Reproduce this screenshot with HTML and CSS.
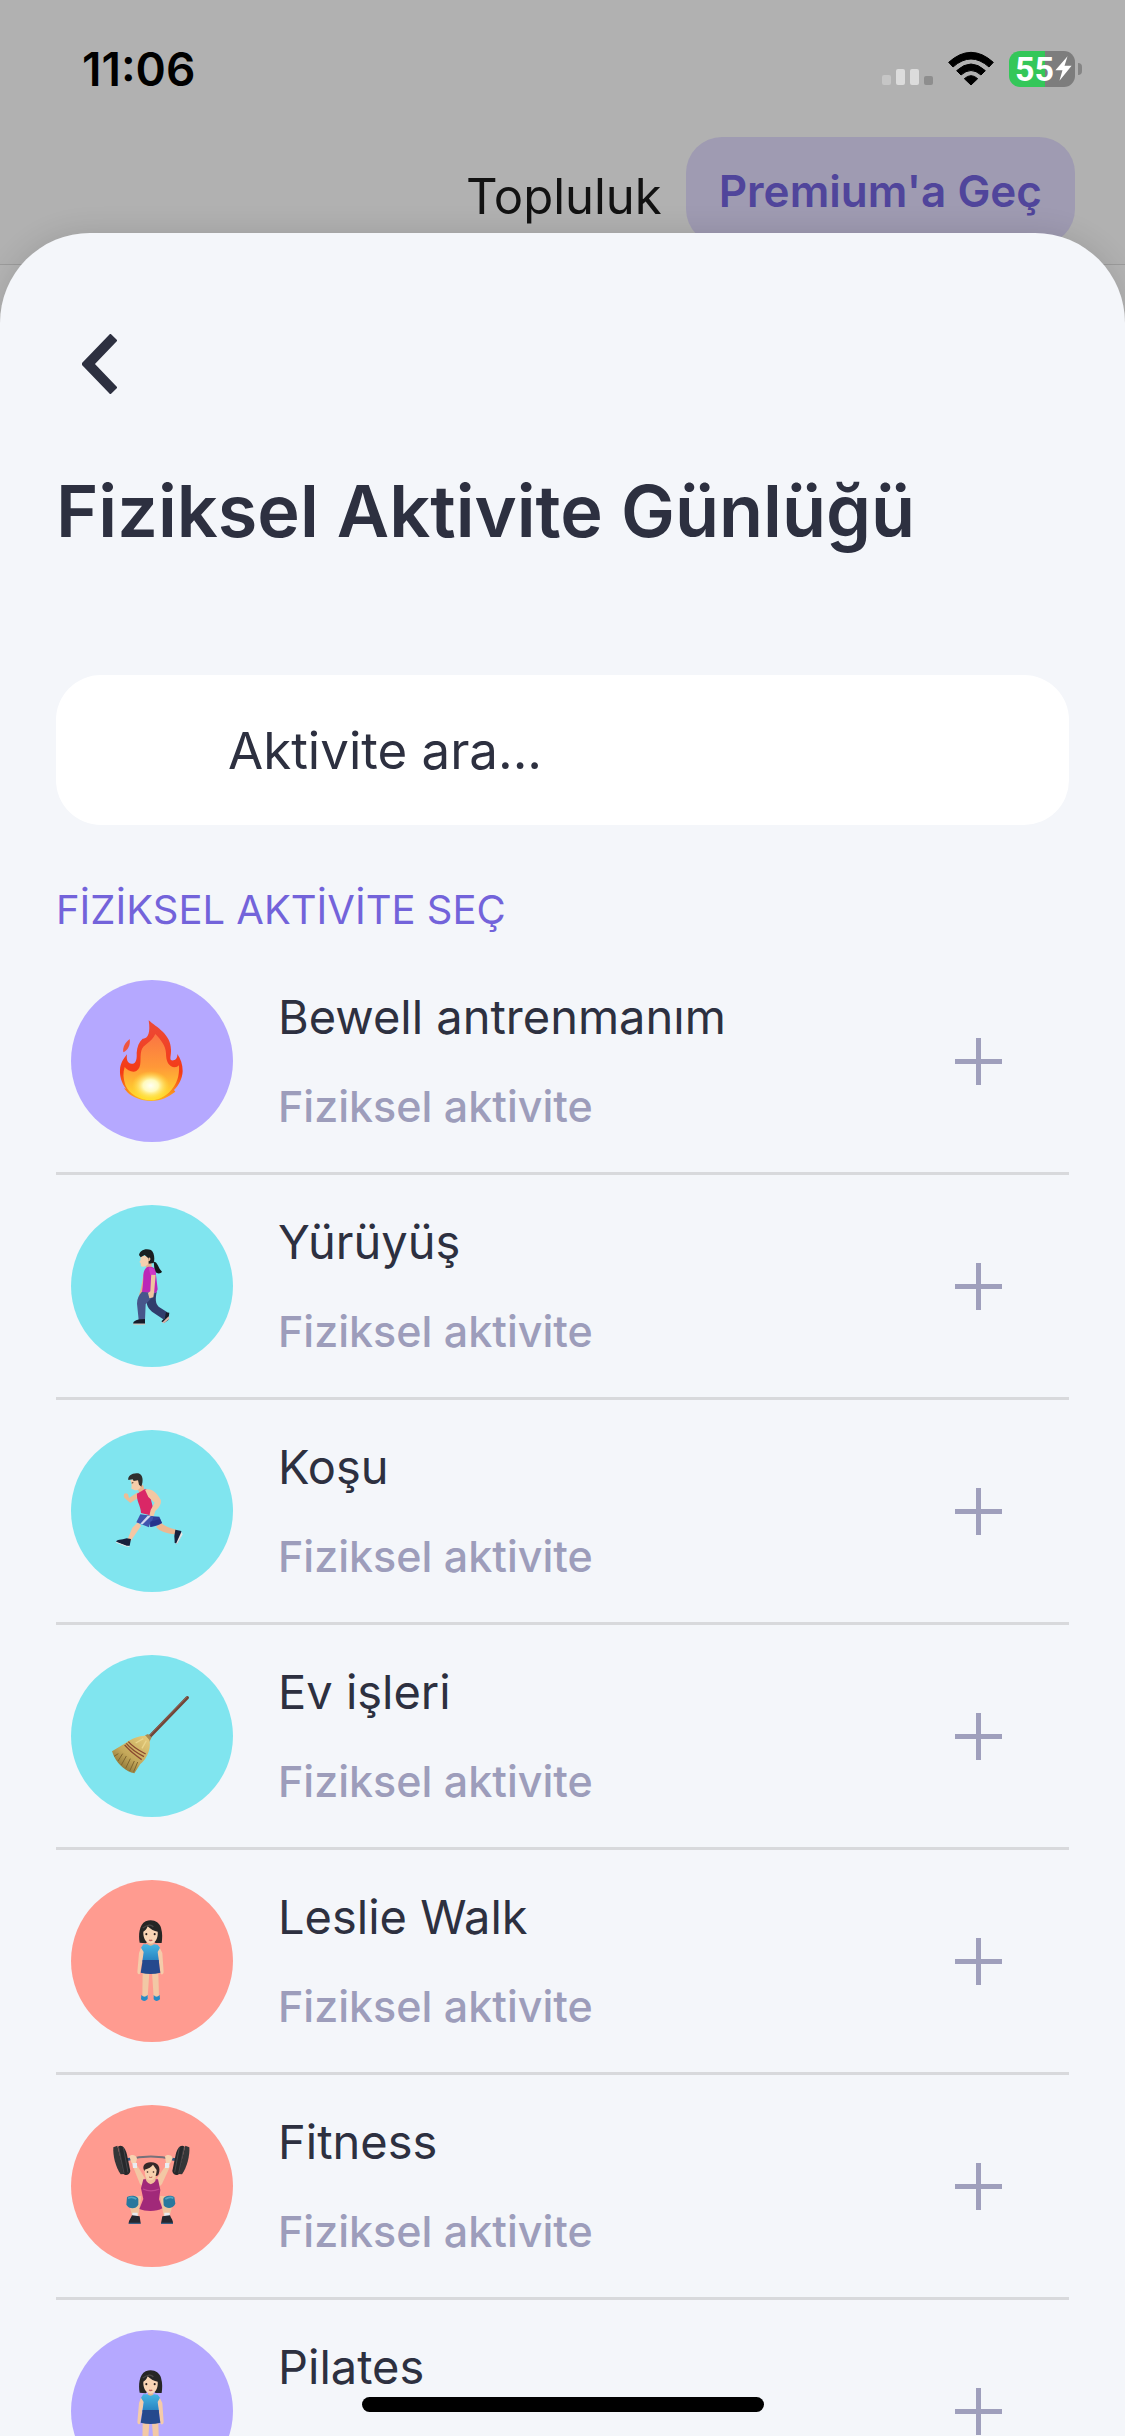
FILE: index.html
```html
<!DOCTYPE html>
<html lang="tr">
<head>
  <meta charset="UTF-8" />
  <meta name="viewport" content="width=device-width, initial-scale=1" />
  <title>Fiziksel Aktivite Günlüğü</title>
  <link rel="stylesheet" href="styles.css">
</head>
<body>
  <header class="backdrop">
    <div class="status-bar">
      <span class="clock">11:06</span>
      <div class="status-icons">
        <svg class="signal" viewBox="0 0 51 36" width="51" height="36" aria-hidden="true">
          <rect x="0" y="24" width="9" height="10" rx="2" fill="#c6c6c6"/>
          <rect x="14" y="18" width="9" height="16" rx="2" fill="#dcdcdc"/>
          <rect x="28" y="18" width="9" height="16" rx="2" fill="#dcdcdc"/>
          <rect x="42" y="25" width="9" height="9" rx="2" fill="#8e8e8e"/>
        </svg>
        <svg class="wifi" viewBox="0 0 138 108" width="46" height="36" aria-hidden="true">
          <path d="M2 34 Q69 -26 136 34 L123 48 Q69 0 15 48 Z" stroke="#000" stroke-width="3" stroke-linejoin="round"/>
          <path d="M26 59 Q69 19 112 59 L99 72 Q69 45 39 72 Z" stroke="#000" stroke-width="3" stroke-linejoin="round"/>
          <path d="M49 83 Q69 65 89 83 L69 102 Z" stroke="#000" stroke-width="3" stroke-linejoin="round"/>
        </svg>
        <div class="battery">
          <span class="battery-level">55<svg viewBox="0 0 50 74" width="17" height="25" aria-hidden="true"><path d="M37 1 L1 42 H22 L13 73 L49 29 H28 Z" fill="#fff"/></svg></span>
          <span class="battery-tip"></span>
        </div>
      </div>
    </div>
    <nav class="top-nav">
      <a href="#" class="community">Topluluk</a>
      <button type="button" class="premium">Premium'a Geç</button>
    </nav>
  </header>

  <main class="sheet">
    <button type="button" class="back" aria-label="Geri">
      <svg viewBox="0 0 35 60" width="35" height="60"><path d="M32 3 L6 30 L32 57" fill="none" stroke="#2d3040" stroke-width="10"/></svg>
    </button>
    <h1>Fiziksel Aktivite Günlüğü</h1>
    <input type="text" class="search" placeholder="Aktivite ara..." aria-label="Aktivite ara" />
    <h2>FİZİKSEL AKTİVİTE SEÇ</h2>

    <ul class="activities">
      <li>
        <span class="icon purple"><svg viewBox="33 29 486 486" aria-hidden="true">
          <path d="M209 206 C212 225 203 240 190 246 C187 231 195 217 209 206Z" fill="#ef5540"/>
          <path d="M266 150 C290 171 333 192 333 238 C334 253 328 266 334 270 C345 272 353 264 352 251 C362 266 368 282 368 302 C367 326 356 345 342 359 L346 364 L335 372 C318 385 296 392 274 392 C244 392 215 380 202 366 L192 354 L198 355 C184 337 179 318 180 298 C181 279 190 266 201 252 C198 269 204 283 219 280 C229 278 231 263 230 248 C231 229 237 215 248 205 C264 206 272 188 266 150Z" fill="url(#flameOuter)"/>
          <path d="M286 191 C304 210 317 226 318 249 C318 273 326 288 342 291 C353 290 357 286 357 284 C359 318 350 340 334 359 C319 378 294 390 273 390 C239 390 207 371 196 344 C190 325 188 308 194 290 C201 300 218 308 229 302 C248 290 238 262 244 241 C249 221 274 219 286 191Z" fill="url(#flameMid)"/>
          <ellipse cx="272" cy="346" rx="57" ry="44" fill="url(#flameCore)"/>
        </svg></span>
        <div class="info">
          <h3>Bewell antrenmanım</h3>
          <p>Fiziksel aktivite</p>
        </div>
        <button type="button" class="add" aria-label="Bewell antrenmanım ekle"><svg viewBox="0 0 47 47"><use href="#plus"/></svg></button>
      </li>
      <li>
        <span class="icon cyan"><svg viewBox="33 29 486 486" aria-hidden="true">
          <path d="M281 199 C294 200 293 216 306 229 C302 236 290 236 284 228Z" fill="#15191b"/>
          <path d="M252 230 L243 278 L237 300 L243 305 L252 288Z" fill="#e4b18d"/>
          <path d="M260 300 L290 290 C286 311 286 324 296 334 L322 351 L312 373 L276 349 C261 338 257 321 260 300Z" fill="#303d6c"/>
          <path d="M246 289 L286 292 C279 308 263 317 257 327 L255 374 L236 373 L231 325 C231 309 237 299 246 289Z" fill="#47568b"/>
          <path d="M318 351 L328 352 L325 374 L312 383 L304 378 L314 369Z" fill="#171c2b"/>
          <path d="M326 363 L328 370 L312 384 L306 382Z" fill="#dcb8ac"/>
          <path d="M237 372 L255 371 V385 H220 C219 377 228 376 237 372Z" fill="#171c2b"/>
          <path d="M220 385 H256 V388 H220Z" fill="#e3beb0"/>
          <path d="M256 204 L274 201 L276 221 L259 220Z" fill="#e3b18d"/>
          <path d="M262 215 C276 212 286 217 287 229 L293 282 L289 292 L246 290 C249 271 250 254 250 240 C251 226 255 219 262 215Z" fill="#bb28b8"/>
          <path d="M274 232 L287 238 L283 285 L280 306 L268 309 L264 293 L271 288Z" fill="#f0c39e"/>
          <path d="M266 217 C281 213 288 227 287 239 L271 238Z" fill="#ce3ac7"/>
          <path d="M243 182 L241 196 L238 200 L242 203 L243 213 C251 217 264 211 268 199 L270 181Z" fill="#f5cfae"/>
          <path d="M237 179 C240 163 259 158 273 164 C283 171 285 190 281 203 L266 205 L265 189 L254 179 L242 186Z" fill="#1a1e20"/>
          <path d="M266 187 q6 -3 5 6 q-4 7 -7 4z" fill="#edb996"/>
        </svg></span>
        <div class="info">
          <h3>Yürüyüş</h3>
          <p>Fiziksel aktivite</p>
        </div>
        <button type="button" class="add" aria-label="Yürüyüş ekle"><svg viewBox="0 0 47 47"><use href="#plus"/></svg></button>
      </li>
      <li>
        <span class="icon cyan"><svg viewBox="33 29 486 486" aria-hidden="true">
          <path d="M233 234 L211 248 L193 232 C188 221 195 216 204 221 L207 233 L233 216Z" fill="#edbd96"/>
          <path d="M302 306 C314 319 331 324 349 328 L345 342 C320 340 299 333 288 320Z" fill="#ecb892"/>
          <path d="M235 304 L217 322 L203 356 L212 362 L243 317Z" fill="#f3c6a3"/>
          <path d="M268 287 L298 289 L306 308 C294 316 284 318 271 320Z" fill="#2e419a"/>
          <path d="M241 282 L279 287 C282 298 269 307 267 321 L229 306Z" fill="#4055ad"/>
          <path d="M263 286 L272 288 L248 312 L241 310Z" fill="#d2d8ef"/>
          <path d="M271 304 L300 296 L306 308 L271 320Z" fill="#26338d"/>
          <path d="M346 328 L364 332 L362 350 L350 372 L344 366 L343 347Z" fill="#17203c"/>
          <path d="M364 335 L368 342 L351 372 L348 370Z" fill="#e5e5e4"/>
          <path d="M200 354 L213 356 L209 376 L199 377 L169 365 C168 357 185 360 200 354Z" fill="#17203c"/>
          <path d="M168 364 L200 376 L208 377 V380 L196 378 L168 367Z" fill="#e5e5e4"/>
          <path d="M232 203 L249 193 L255 214 L238 218Z" fill="#e9b48e"/>
          <path d="M231 220 C239 216 249 208 258 205 L268 219 L281 270 L270 285 L243 278 C243 258 229 243 231 220Z" fill="#da2766"/>
          <path d="M255 208 C276 203 290 217 302 238 C306 253 293 266 286 272 L281 287 L268 286 L272 269 L284 247 L265 230Z" fill="#f4c7a2"/>
          <path d="M211 178 L215 193 L214 205 L225 210 C238 210 242 201 247 190 L240 176Z" fill="#f5cda9"/>
          <path d="M205 179 C202 167 218 156 235 159 C249 163 251 181 244 199 L237 193 L234 180 L221 182 L218 177Z" fill="#30302e"/>
          <path d="M215 188 l5 -1" stroke="#493127" stroke-width="3"/>
        </svg></span>
        <div class="info">
          <h3>Koşu</h3>
          <p>Fiziksel aktivite</p>
        </div>
        <button type="button" class="add" aria-label="Koşu ekle"><svg viewBox="0 0 47 47"><use href="#plus"/></svg></button>
      </li>
      <li>
        <span class="icon cyan"><svg viewBox="33 29 486 486" aria-hidden="true">
          <path d="M382 157 L269 274" stroke="#704537" stroke-width="10" stroke-linecap="round"/>
          <path d="M380 156 L267 272" stroke="#946050" stroke-width="3" stroke-linecap="round"/>
          <path d="M255 270 L264 266 L275 276 L268 290Z" fill="#aa8a50"/>
          <path d="M257 271 C240 270 215 279 198 292 L156 318 C166 351 193 377 223 384 L241 356 C264 337 274 306 268 284Z" fill="url(#straw)"/>
          <path d="M175 325 L162 333 M188 325 L174 347 M199 332 L184 359 M211 340 L197 369 M223 347 L209 377 M233 350 L221 379" stroke="#80662f" stroke-width="3"/>
          <path d="M205 289 Q221 308 257 326 M199 294 Q216 315 252 334 M194 299 Q213 321 245 343" fill="none" stroke="#8a4930" stroke-width="4"/>
          <path d="M250 280 L227 293 M259 286 L246 309" stroke="#ead58a" stroke-width="4"/>
        </svg></span>
        <div class="info">
          <h3>Ev işleri</h3>
          <p>Fiziksel aktivite</p>
        </div>
        <button type="button" class="add" aria-label="Ev işleri ekle"><svg viewBox="0 0 47 47"><use href="#plus"/></svg></button>
      </li>
      <li>
        <span class="icon coral"><svg viewBox="33 29 486 486" aria-hidden="true"><use href="#standing"/></svg></span>
        <div class="info">
          <h3>Leslie Walk</h3>
          <p>Fiziksel aktivite</p>
        </div>
        <button type="button" class="add" aria-label="Leslie Walk ekle"><svg viewBox="0 0 47 47"><use href="#plus"/></svg></button>
      </li>
      <li>
        <span class="icon coral"><svg viewBox="33 29 486 486" aria-hidden="true">
          <path d="M202 193 Q272 174 344 193" fill="none" stroke="#77727a" stroke-width="6"/>
          <path d="M199 193 L211 191 M335 191 L348 193" stroke="#31527e" stroke-width="8"/>
          <path d="M160 156 L172 151 L193 236 L182 237 C167 216 158 180 160 156Z" fill="#353638"/>
          <path d="M174 154 C185 147 195 155 201 178 L211 227 C209 240 196 242 190 235Z" fill="#27282b"/>
          <path d="M176 156 L192 234 M190 156 L204 231" stroke="#55565a" stroke-width="2"/>
          <path d="M388 156 L376 151 L355 236 L366 237 C381 216 390 180 388 156Z" fill="#353638"/>
          <path d="M374 154 C363 147 353 155 347 178 L337 227 C339 240 352 242 358 235Z" fill="#27282b"/>
          <path d="M372 156 L356 234 M358 156 L344 231" stroke="#55565a" stroke-width="2"/>
          <path d="M218 211 L232 211 L254 247 L251 276 L240 266Z" fill="#f3c7a4"/>
          <path d="M317 211 L331 211 L306 266 L296 276 L292 247Z" fill="#f3c7a4"/>
          <path d="M208 183 C214 176 230 178 231 190 L228 203 L215 204 Z M315 183 C321 176 337 178 338 189 L331 204 L318 203Z" fill="#f7d2b0"/>
          <path d="M217 203 H231 V218 H219Z M315 203 H329 L326 218 H315Z" fill="#e9edf2"/>
          <path d="M244 302 L222 303 L207 325 L216 361 H235 L239 334Z M300 302 L323 303 L339 325 L329 361 H311 L306 334Z" fill="#efc49f"/>
          <path d="M250 252 L294 252 L301 284 L297 312 L307 339 C291 349 257 349 238 341 L250 311 L243 279Z" fill="#a12979"/>
          <path d="M256 243 L259 257 Q272 276 286 257 L288 243 L282 235 H264Z" fill="#f0c19b"/>
          <path d="M249 281 Q272 292 298 281" fill="none" stroke="#bd4691" stroke-width="4"/>
          <path d="M253 226 C244 211 257 199 274 201 C295 201 303 218 296 236 C292 244 287 242 282 239Z" fill="#35282a"/>
          <path d="M254 223 Q272 218 279 208 L290 224 C289 245 280 255 271 255 C260 255 254 243 254 223Z" fill="#f7d1ae"/>
          <path d="M262 230 h1 M280 230 h1" stroke="#422b25" stroke-width="4" stroke-linecap="round"/>
          <path d="M267 245 q5 3 10 0" fill="none" stroke="#b65b53" stroke-width="3"/>
          <path d="M201 305 C215 298 234 302 235 312 V328 C228 342 207 342 199 328Z M310 312 C311 302 331 298 343 305 L346 325 C338 342 319 341 311 330Z" fill="#28789d"/>
          <path d="M204 309 Q215 302 229 311 M316 311 Q331 302 340 309" fill="none" stroke="#54a4c1" stroke-width="5"/>
          <path d="M217 352 H233 V363 H217Z M313 352 H329 V363 H313Z" fill="#e7eaef"/>
          <path d="M216 360 L239 363 L242 384 H206 C206 374 213 369 216 360Z M330 360 L307 363 L303 384 H339 C340 376 333 369 330 360Z" fill="#242830"/>
          <path d="M206 384 H242 M303 384 H339" stroke="#395c81" stroke-width="4"/>
        </svg></span>
        <div class="info">
          <h3>Fitness</h3>
          <p>Fiziksel aktivite</p>
        </div>
        <button type="button" class="add" aria-label="Fitness ekle"><svg viewBox="0 0 47 47"><use href="#plus"/></svg></button>
      </li>
      <li>
        <span class="icon purple"><svg viewBox="33 29 486 486" aria-hidden="true"><use href="#standing"/></svg></span>
        <div class="info">
          <h3>Pilates</h3>
        </div>
        <button type="button" class="add" aria-label="Pilates ekle"><svg viewBox="0 0 47 47"><use href="#plus"/></svg></button>
      </li>
    </ul>
  </main>

  <div class="home-indicator"></div>

  <!-- shared shapes and gradients -->
  <svg class="defs" width="0" height="0" aria-hidden="true">
    <defs>
      <linearGradient id="flameOuter" x1="0" y1="0" x2="0" y2="1">
        <stop offset="0" stop-color="#ec4a38"/>
        <stop offset=".65" stop-color="#f43b16"/>
        <stop offset="1" stop-color="#ffb01e"/>
      </linearGradient>
      <linearGradient id="flameMid" x1="0" y1="0" x2="0" y2="1">
        <stop offset="0" stop-color="#fa7544"/>
        <stop offset=".5" stop-color="#ff9838"/>
        <stop offset="1" stop-color="#ffe12c"/>
      </linearGradient>
      <radialGradient id="flameCore">
        <stop offset="0" stop-color="#fffff4"/>
        <stop offset=".4" stop-color="#fffabc"/>
        <stop offset="1" stop-color="#ffe43a" stop-opacity="0"/>
      </radialGradient>
      <linearGradient id="straw" x1="1" y1="0" x2="0.2" y2="1">
        <stop offset="0" stop-color="#e6cd7d"/>
        <stop offset=".6" stop-color="#c4a85a"/>
        <stop offset="1" stop-color="#7f672d"/>
      </linearGradient>
      <linearGradient id="blouse" x1="0" y1="0" x2="0" y2="1">
        <stop offset="0" stop-color="#45b5e2"/>
        <stop offset="1" stop-color="#2780bf"/>
      </linearGradient>
      <symbol id="plus" viewBox="0 0 47 47">
        <path d="M0 23.5 H47 M23.5 0 V47" stroke="#9f9fbc" stroke-width="5"/>
      </symbol>
      <g id="standing">
        <path d="M248 307 H268 L263 379 H247Z M276 307 H295 L297 379 H281Z" fill="#f2c8a5"/>
        <path d="M244 374 Q253 384 263 374 V386 Q253 397 243 387Z M281 374 Q289 384 299 374 L300 387 Q289 397 281 387Z" fill="#268bc6"/>
        <path d="M244 230 L252 243 L241 304 C241 313 234 315 232 306 L237 248Z M298 230 L292 243 L301 304 C301 314 309 315 311 306 L307 248Z" fill="#f5cba9"/>
        <path d="M264 209 H280 V226 Q272 236 264 226Z" fill="#e6b38e"/>
        <path d="M250 222 L262 222 Q272 230 282 222 L293 223 L300 232 L293 245 L297 274 H247 L251 245 L243 232Z" fill="url(#blouse)"/>
        <path d="M248 269 H296 L301 307 Q272 315 242 307Z" fill="#25498d"/>
        <path d="M239 217 C235 195 237 163 257 153 C278 144 298 155 303 172 C308 189 307 204 305 218 L287 218 L272 207 L257 219Z" fill="#262625"/>
        <path d="M250 184 Q258 181 263 168 Q277 182 293 184 C295 203 286 219 272 220 C257 219 249 201 250 184Z" fill="#f8d5b5"/>
        <path d="M248 173 Q271 157 280 170" fill="none" stroke="#4a4745" stroke-width="4"/>
        <path d="M259 191 v1 M284 191 v1" stroke="#2c211f" stroke-width="6" stroke-linecap="round"/>
        <path d="M267 209 q5 3 10 0" fill="none" stroke="#c5605b" stroke-width="4"/>
      </g>
    </defs>
  </svg>
</body>
</html>
```
FILE: styles.css
```css
* {
  box-sizing: border-box;
}
body {
  margin: 0;
  height: 100vh;
  display: flex;
  flex-direction: column;
  overflow: hidden;
  background: #b4b4b4;
  font-family: Inter, 'Segoe UI', sans-serif;
  color: #2d3040;
}
h1, h2, h3, p, ul {
  margin: 0;
  padding: 0;
}
button {
  border: none;
  background: none;
  padding: 0;
  font-family: inherit;
  cursor: pointer;
}
svg {
  display: block;
}
.defs {
  position: absolute;
}

/* dimmed page behind the sheet */
.backdrop {
  flex: none;
  background: #b1b1b1;
  border-bottom: 1px solid #9c9c9c;
}
.status-bar {
  display: flex;
  align-items: center;
  justify-content: space-between;
  height: 137px;
  padding: 0 43px 0 82px;
}
.clock {
  font-size: 46px;
  font-weight: 600;
  color: #000;
}
.status-icons {
  display: flex;
  align-items: center;
  gap: 15px;
}
.battery {
  display: flex;
  align-items: center;
  gap: 3px;
}
.battery-level {
  display: flex;
  align-items: center;
  gap: 1px;
  width: 66px;
  height: 36px;
  padding-left: 6px;
  border-radius: 11px;
  background: linear-gradient(to right, #34c759 55%, #7d7d7d 55%);
  color: #fff;
  font: 700 34px/36px Roboto, sans-serif;
}
.battery-tip {
  width: 4px;
  height: 12px;
  border-radius: 0 4px 4px 0;
  background: #858585;
}
.top-nav {
  display: flex;
  justify-content: flex-end;
  gap: 24px;
  height: 127px;
  padding-right: 50px;
}
.community {
  font-size: 49px;
  line-height: 120px;
  color: #121212;
  text-decoration: none;
}
.premium {
  height: 108px;
  padding: 0 33px;
  border-radius: 36px;
  background: #9f9bb2;
  color: #50459b;
  font-size: 44px;
  font-weight: 600;
}

.sheet {
  position: relative;
  flex: 1;
  min-height: 0;
  margin-top: -32px;
  padding: 101px 56px 0;
  overflow-y: auto;
  scrollbar-width: none;
  border-radius: 90px 90px 0 0;
  background: #f4f6fa;
  box-shadow: 0 0 30px rgba(0, 0, 0, 0.12);
}
.back {
  display: block;
  margin-left: 26px;
}
h1 {
  margin-top: 75px;
  font-size: 72px;
  line-height: 84px;
  font-weight: 600;
}
.search {
  display: block;
  width: 100%;
  height: 150px;
  margin-top: 122px;
  padding: 0 50px 0 172px;
  border: none;
  border-radius: 45px;
  background: #fff;
  font-family: inherit;
  font-size: 51px;
  color: #2d3040;
}
.search::placeholder {
  color: #2d3040;
  opacity: 1;
}
h2 {
  margin: 60px 0 15px;
  font-size: 40px;
  line-height: 50px;
  font-weight: 400;
  color: #7363da;
}

.activities {
  list-style: none;
}
.activities li {
  display: flex;
  align-items: center;
  gap: 45px;
  padding: 30px 67px 30px 15px;
  border-bottom: 3px solid #d8d9dc;
}
.icon {
  flex: none;
  width: 162px;
  height: 162px;
  border-radius: 50%;
}
.purple { background: #b5a8ff; }
.cyan { background: #80e5ef; }
.coral { background: #ff9b90; }
.info {
  flex: 1;
  display: flex;
  flex-direction: column;
  gap: 29px;
  min-height: 149px;
}
.info h3 {
  font-size: 47px;
  line-height: 60px;
  font-weight: 400;
}
.info p {
  font-size: 43px;
  line-height: 60px;
  font-weight: 500;
  color: #9d9dbb;
}
.add {
  flex: none;
  width: 47px;
  height: 47px;
}

.home-indicator {
  position: fixed;
  bottom: 24px;
  left: 50%;
  transform: translateX(-50%);
  width: 402px;
  height: 15px;
  border-radius: 8px;
  background: #000;
}
```
